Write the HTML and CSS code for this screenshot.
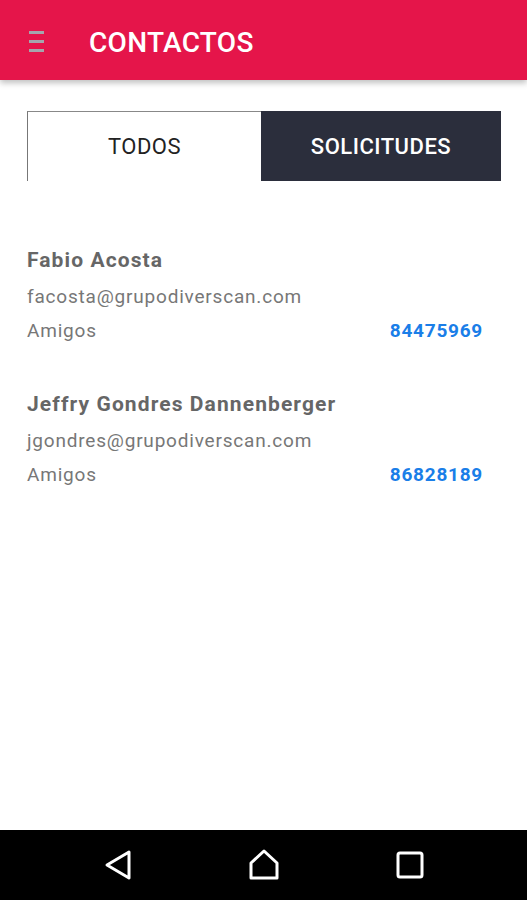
FILE: index.html
```html
<!DOCTYPE html>
<html lang="es">
<head>
    <meta name="viewport" content="width=device-width, initial-scale=1">
    <meta charset="UTF-8">
    <title>Contactos</title>
    <link rel="stylesheet" href="styles.css">
</head>
<body>
    <div class="app">
        <header class="topbar">
            <span class="menu-icon"><i></i><i></i><i></i></span>
            <h1>CONTACTOS</h1>
        </header>

        <main class="content">
            <div class="tabs">
                <div class="tab active">TODOS</div>
                <div class="tab">SOLICITUDES</div>
            </div>

            <ul class="contacts">
                <li class="contact">
                    <div class="name">Fabio Acosta</div>
                    <div class="email">facosta@grupodiverscan.com</div>
                    <div class="row">
                        <span class="group">Amigos</span>
                        <span class="phone">84475969</span>
                    </div>
                </li>
                <li class="contact">
                    <div class="name">Jeffry Gondres Dannenberger</div>
                    <div class="email">jgondres@grupodiverscan.com</div>
                    <div class="row">
                        <span class="group">Amigos</span>
                        <span class="phone">86828189</span>
                    </div>
                </li>
            </ul>
        </main>

        <nav class="navbar">
            <svg width="28" height="32" viewBox="0 0 28 32">
                <path d="M25 3 L3 16 L25 29 Z" fill="none" stroke="#fff" stroke-width="3" stroke-linejoin="round"/>
            </svg>
            <svg width="32" height="32" viewBox="0 0 32 32">
                <path d="M16 2 L29 14 L29 29 L3 29 L3 14 Z" fill="none" stroke="#fff" stroke-width="3" stroke-linejoin="round"/>
            </svg>
            <svg width="28" height="28" viewBox="0 0 28 28">
                <rect x="2" y="2" width="24" height="24" rx="2" fill="none" stroke="#fff" stroke-width="3"/>
            </svg>
        </nav>
    </div>
</body>
</html>
```

FILE: styles.css
```css
* {
    box-sizing: border-box;
}
body {
    margin: 0;
    font-family: Roboto, "Liberation Sans", sans-serif;
    background: #fff;
}
.app {
    display: flex;
    flex-direction: column;
    height: 900px;
}
.topbar {
    height: 80px;
    background: #e5154a;
    display: flex;
    align-items: center;
    padding-left: 29px;
    box-shadow: 0 3px 6px rgba(0, 0, 0, 0.25);
    position: relative;
    z-index: 1;
}
.menu-icon {
    display: flex;
    flex-direction: column;
    gap: 6px;
    width: 15px;
    margin-top: 3px;
}
.menu-icon i {
    display: block;
    height: 3px;
    background: #a5a5ad;
}
.topbar h1 {
    margin: 5px 0 0 45px;
    color: #fff;
    font-size: 28px;
    font-weight: 500;
    letter-spacing: 0.3px;
}
.content {
    flex: 1;
    padding: 31px 26px 0 27px;
}
.tabs {
    display: flex;
    height: 70px;
}
.tab {
    flex: 1;
    display: flex;
    align-items: center;
    justify-content: center;
    font-size: 22px;
    font-weight: 500;
    letter-spacing: 0.5px;
    background: #2b2e3c;
    color: #fff;
}
.tab.active {
    flex: 0 0 234px;
    background: #fff;
    color: #222;
    font-weight: 400;
    border-left: 1.5px solid #777;
    border-top: 1.5px solid #888;
}
.contacts {
    list-style: none;
    margin: 0;
    padding: 67px 0 0;
}
.contact {
    margin-bottom: 49px;
}
.name {
    font-size: 21px;
    font-weight: 700;
    letter-spacing: 1.1px;
    color: #666;
    line-height: 24px;
}
.email,
.row {
    font-size: 19px;
    letter-spacing: 0.8px;
    color: #777;
    line-height: 24px;
}
.email {
    margin-top: 13px;
}
.row {
    display: flex;
    justify-content: space-between;
    margin-top: 10px;
    padding-right: 18px;
}
.phone {
    color: #1a7ee8;
    font-weight: 700;
    letter-spacing: 0.75px;
}
.navbar {
    height: 70px;
    background: #000;
    display: grid;
    grid-template-columns: repeat(3, 146px);
    justify-content: center;
    justify-items: center;
    align-items: center;
}
```
